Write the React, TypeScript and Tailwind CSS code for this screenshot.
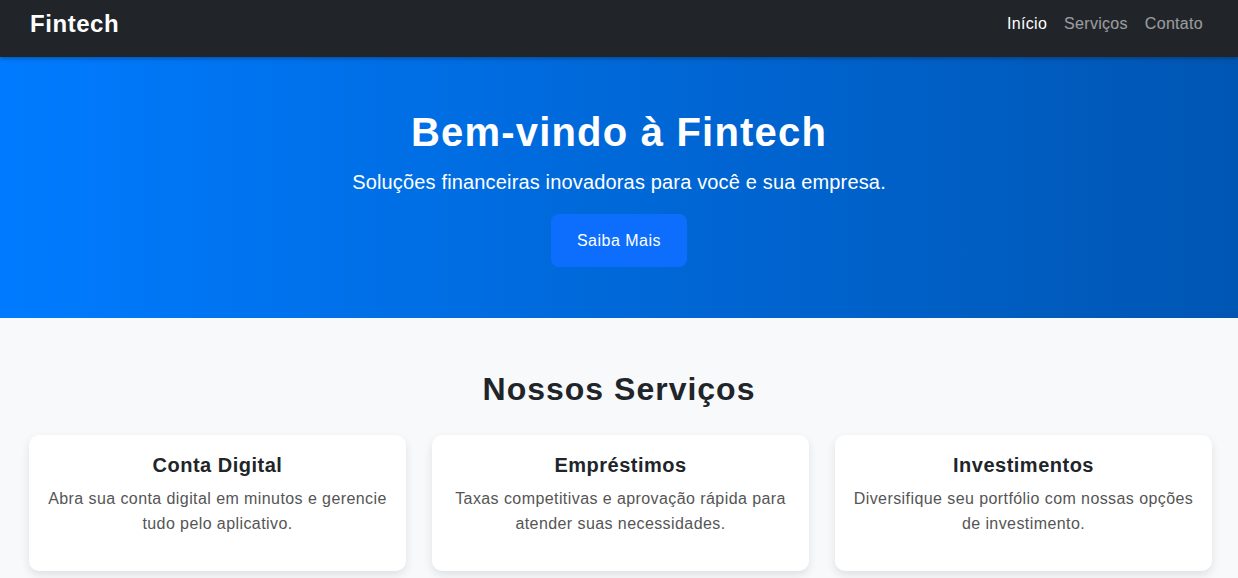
const services = [
  {
    title: "Conta Digital",
    text: "Abra sua conta digital em minutos e gerencie tudo pelo aplicativo.",
  },
  {
    title: "Empréstimos",
    text: "Taxas competitivas e aprovação rápida para atender suas necessidades.",
  },
  {
    title: "Investimentos",
    text: "Diversifique seu portfólio com nossas opções de investimento.",
  },
];

export default function App() {
  return (
    <div className="min-h-[578px] bg-[#f8f9fa] font-['Liberation_Sans',Arial,sans-serif]">
      {/* navbar */}
      <nav className="relative z-10 flex h-[57px] items-start justify-between bg-[#212529] pl-[30px] pr-[35px] shadow-[0_2px_4px_rgba(0,0,0,0.25)]">
        <a href="#" className="py-[6px] text-[24px] font-bold leading-[36px] tracking-[0.55px] text-white">
          Fintech
        </a>
        <ul className="flex gap-[17px] py-[12px] text-[16px] leading-[24px] tracking-[0.3px]">
          <li>
            <a href="#" className="text-white">Início</a>
          </li>
          <li>
            <a href="#" className="text-white/55">Serviços</a>
          </li>
          <li>
            <a href="#" className="text-white/55">Contato</a>
          </li>
        </ul>
      </nav>

      {/* hero */}
      <header className="flex h-[261px] flex-col items-center bg-linear-to-r from-[#007bff] to-[#0056b3] pt-[51px] text-center text-white">
        <h1 className="text-[40px] font-bold leading-[48px] tracking-[1.2px]">Bem-vindo à Fintech</h1>
        <p className="mt-[11px] text-[20px] leading-[30px] tracking-[0.16px]">
          Soluções financeiras inovadoras para você e sua empresa.
        </p>
        <a
          href="#"
          className="mt-[17px] rounded-[8px] bg-[#0d6efd] px-[26px] py-[15px] text-[16px] leading-[23px] tracking-[0.5px] text-white"
        >
          Saiba Mais
        </a>
      </header>

      {/* serviços */}
      <section className="pt-[52px]">
        <h2 className="text-center text-[32px] font-bold leading-[38px] tracking-[1px] text-[#212529]">
          Nossos Serviços
        </h2>
        <div className="mt-[27px] flex gap-[26px] pl-[29px] pr-[26px]">
          {services.map((s) => (
            <div
              key={s.title}
              className="flex-1 rounded-[10px] bg-white px-[14px] pb-[35px] pt-[18px] text-center shadow-[0_4px_10px_rgba(0,0,0,0.1)]"
            >
              <h3 className="text-[20px] font-bold leading-[24px] tracking-[0.5px] text-[#212529]">{s.title}</h3>
              <p className="mt-[9px] text-[16px] leading-[25px] tracking-[0.42px] text-[#555]">{s.text}</p>
            </div>
          ))}
        </div>
      </section>
    </div>
  );
}
